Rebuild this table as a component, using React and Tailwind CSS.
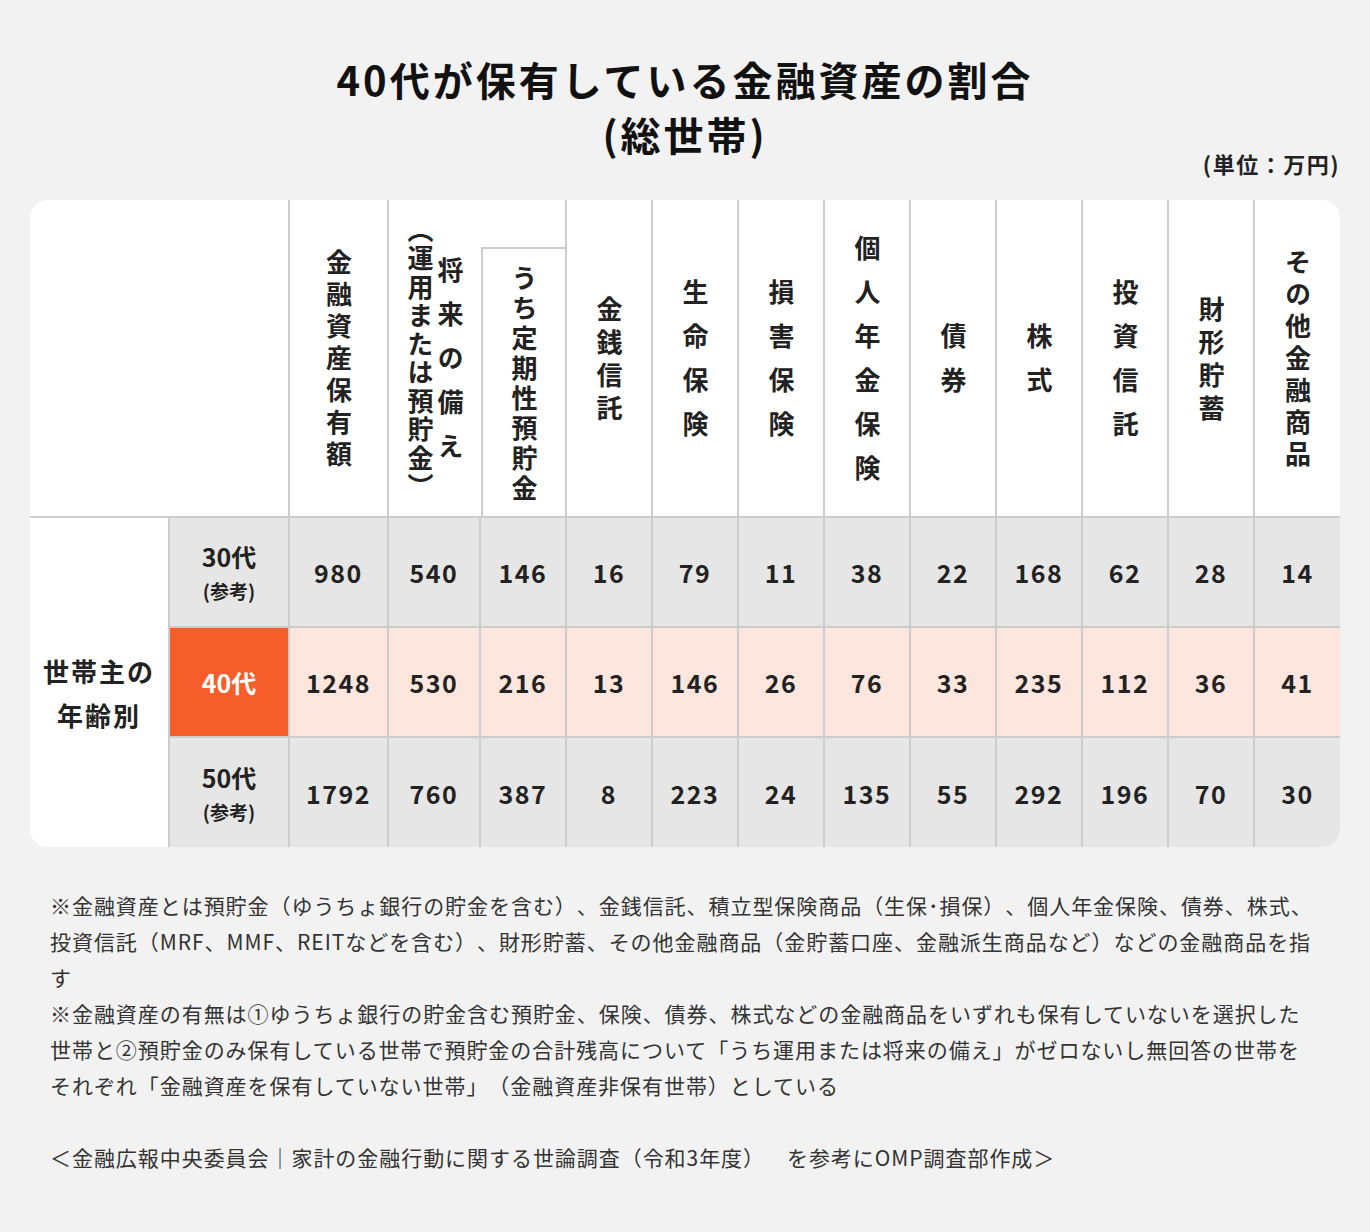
import React from "react";

const COLS = [
  { w: "w-[99px]", label: "金融資産保有額", track: "tracking-[6px] pt-[6px]" },
  { w: "w-[178px]", group: true },
  { w: "w-[86px]", label: "金銭信託", track: "tracking-[7px] pt-[7px]" },
  { w: "w-[86px]", label: "生命保険", track: "tracking-[18px] pt-[18px]" },
  { w: "w-[86px]", label: "損害保険", track: "tracking-[18px] pt-[18px]" },
  { w: "w-[86px]", label: "個人年金保険", track: "tracking-[18px] pt-[18px]" },
  { w: "w-[86px]", label: "債券", track: "tracking-[18px] pt-[18px]" },
  { w: "w-[86px]", label: "株式", track: "tracking-[18px] pt-[18px]" },
  { w: "w-[86px]", label: "投資信託", track: "tracking-[18px] pt-[18px]" },
  { w: "w-[86px]", label: "財形貯蓄", track: "tracking-[7px] pt-[7px]" },
  { w: "w-[85px]", label: "その他金融商品", track: "tracking-[6px] pt-[6px]", last: true },
];

const DATA_W = [
  "w-[99px]",
  "w-[92px]",
  "w-[86px]",
  "w-[86px]",
  "w-[86px]",
  "w-[86px]",
  "w-[86px]",
  "w-[86px]",
  "w-[86px]",
  "w-[86px]",
  "w-[86px]",
  "w-[85px]",
];

const ROWS = [
  { label: "30代", sub: "(参考)", vals: [980, 540, 146, 16, 79, 11, 38, 22, 168, 62, 28, 14], hl: false },
  { label: "40代", vals: [1248, 530, 216, 13, 146, 26, 76, 33, 235, 112, 36, 41], hl: true },
  { label: "50代", sub: "(参考)", vals: [1792, 760, 387, 8, 223, 24, 135, 55, 292, 196, 70, 30], hl: false },
];

function VText({ children, className = "" }) {
  return (
    <span className={"[writing-mode:vertical-rl] font-bold text-[26px] leading-none text-[#222] " + className}>
      {children}
    </span>
  );
}

export default function App() {
  return (
    <div className="min-h-[1232px] w-[1370px] bg-[#f2f2f2] px-[30px] font-['Noto_Sans_CJK_JP','Noto_Sans',sans-serif] text-[#222]">
      <h1 className="pt-[52px] text-center text-[40px] font-bold leading-[55px] tracking-[3px] text-[#111]">
        40代が保有している金融資産の割合
        <br />
        (総世帯)
      </h1>
      <div className="-mt-[13px] text-right text-[22px] font-bold leading-[28px] tracking-[1.5px] text-[#222]">
        (単位：万円)
      </div>

      <div className="mt-[23px] w-[1310px] overflow-hidden rounded-[18px] bg-white">
        {/* header */}
        <div className="flex h-[318px] border-b-2 border-[#cccccc]">
          <div className="w-[260px] border-r-2 border-[#cccccc]" />
          {COLS.map((c, i) =>
            c.group ? (
              <div key={i} className={c.w + " flex border-r-2 border-[#cccccc]"}>
                <div className="flex w-[92px] items-center justify-center">
                  <div className="flex flex-row-reverse items-center gap-[4px]">
                    <VText className="tracking-[18px] pt-[18px]">将来の備え</VText>
                    <VText className="text-[17px] tracking-[2.5px] pt-[2px]">（運用または預貯金）</VText>
                  </div>
                </div>
                <div className="flex flex-1 flex-col">
                  <div className="h-[47px]" />
                  <div className="flex flex-1 items-center justify-center border-l-2 border-t-2 border-[#cccccc]">
                    <VText className="tracking-[4px] pt-[4px]">うち定期性預貯金</VText>
                  </div>
                </div>
              </div>
            ) : (
              <div
                key={i}
                className={
                  c.w +
                  " flex items-center justify-center " +
                  (c.last ? "" : "border-r-2 border-[#cccccc]")
                }
              >
                <VText className={c.track}>{c.label}</VText>
              </div>
            )
          )}
        </div>

        {/* body */}
        <div className="flex">
          <div className="flex w-[140px] items-center justify-center border-r-2 border-[#cccccc] bg-white pt-[20px]">
            <div className="text-center text-[26px] font-bold leading-[44px] tracking-[2px] text-[#222]">
              世帯主の
              <br />
              年齢別
            </div>
          </div>
          <div className="flex flex-1 flex-col">
            {ROWS.map((r, ri) => (
              <div
                key={ri}
                className={
                  "flex " +
                  (ri < 2 ? "h-[110px] border-b-2 border-[#cccccc] " : "h-[109px] ") +
                  (r.hl ? "bg-[#fde6de]" : "bg-[#e6e6e6]")
                }
              >
                <div
                  className={
                    "flex w-[120px] flex-col items-center justify-center border-r-2 border-[#cccccc] " +
                    (r.hl ? "bg-[#f55e2a]" : "")
                  }
                >
                  <div
                    className={
                      "text-[25px] font-bold leading-[38px] " + (r.hl ? "text-white" : "text-[#222]")
                    }
                  >
                    {r.label}
                  </div>
                  {r.sub && (
                    <div className="text-[19px] font-bold leading-[32px] text-[#222]">{r.sub}</div>
                  )}
                </div>
                {r.vals.map((v, vi) => (
                  <div
                    key={vi}
                    className={
                      DATA_W[vi] +
                      " flex items-center justify-center pt-[2px] text-[25px] font-bold tracking-[1.5px] text-[#222] " +
                      (vi < 11 ? "border-r-2 border-[#cccccc]" : "")
                    }
                  >
                    {v}
                  </div>
                ))}
              </div>
            ))}
          </div>
        </div>
      </div>

      <div className="mt-[40px] w-[1300px] pl-[20px] text-[21px] leading-[36px] tracking-[0.95px] text-[#333] whitespace-nowrap [text-spacing-trim:space-all]">
        ※金融資産とは預貯金（ゆうちょ銀行の貯金を含む）、金銭信託、積立型保険商品（生保･損保）、個人年金保険、債券、株式、
        <br />
        投資信託（MRF、MMF、REITなどを含む）、財形貯蓄、その他金融商品（金貯蓄口座、金融派生商品など）などの金融商品を指
        <br />
        す
        <br />
        ※金融資産の有無は①ゆうちょ銀行の貯金含む預貯金、保険、債券、株式などの金融商品をいずれも保有していないを選択した
        <br />
        世帯と②預貯金のみ保有している世帯で預貯金の合計残高について「うち運用または将来の備え」がゼロないし無回答の世帯を
        <br />
        それぞれ「金融資産を保有していない世帯」（金融資産非保有世帯）としている
        <br />
        <br />
        ＜金融広報中央委員会｜家計の金融行動に関する世論調査（令和3年度）　を参考にOMP調査部作成＞
      </div>
    </div>
  );
}
